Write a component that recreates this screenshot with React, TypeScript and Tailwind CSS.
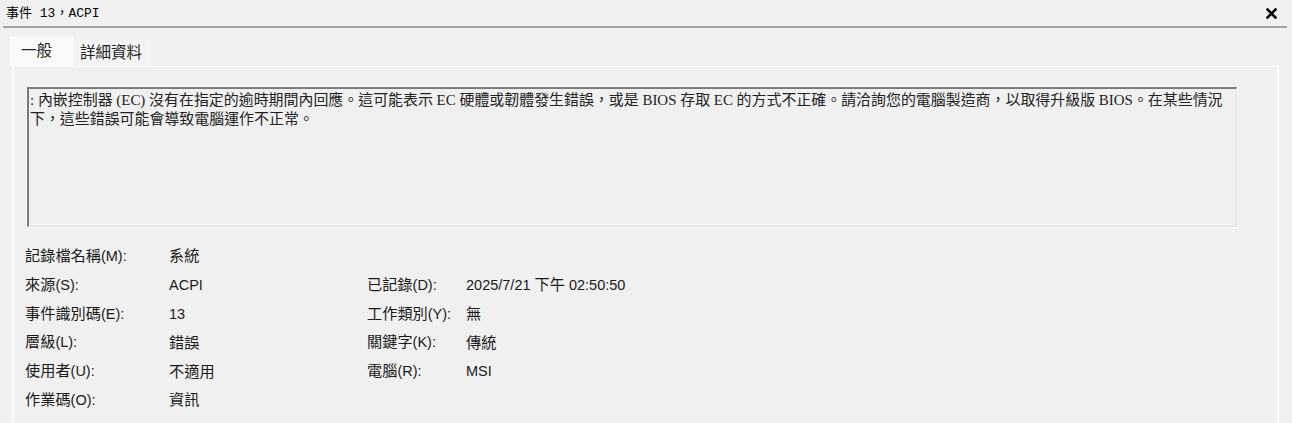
const rows: [string, string, string?, string?][] = [
  ['記錄檔名稱(M):', '系統'],
  ['來源(S):', 'ACPI', '已記錄(D):', '2025/7/21 下午 02:50:50'],
  ['事件識別碼(E):', '13', '工作類別(Y):', '無'],
  ['層級(L):', '錯誤', '關鍵字(K):', '傳統'],
  ['使用者(U):', '不適用', '電腦(R):', 'MSI'],
  ['作業碼(O):', '資訊'],
];

const uiFont = 'font-["Noto_Sans","Noto_Sans_CJK_TC",sans-serif]';

// CJK glyphs sit a bit larger than the latin ones in the dialog font
function Mixed({ text }: { text: string }) {
  const parts = text.match(/[\u3000-\u9fff\uff00-\uffef]+|[^\u3000-\u9fff\uff00-\uffef]+/g) ?? [];
  return (
    <>
      {parts.map((p, i) =>
        /[\u3000-\u9fff\uff00-\uffef]/.test(p) ? (
          <span key={i} className='font-["Noto_Sans_CJK_TC",sans-serif] text-[15.2px]'>{p}</span>
        ) : (
          <span key={i} className='font-["Liberation_Sans",sans-serif] text-[14.5px]'>{p}</span>
        )
      )}
    </>
  );
}

export default function App() {
  return (
    <div className="w-[1292px] h-[423px] overflow-hidden bg-[#f0f0f0] text-black">
      {/* title bar */}
      <div className="flex items-center justify-between h-[26px] pl-[6px] pr-[15px]">
        <span className='font-["Liberation_Mono","Noto_Sans_CJK_TC",monospace] text-[13px] leading-none'>
          事件 13，ACPI
        </span>
        <svg width="11" height="11" viewBox="0 0 11 11" className="mt-[1px]">
          <path d="M1.5 1.5 L9.5 9.5 M9.5 1.5 L1.5 9.5" stroke="#000" strokeWidth="2.6" strokeLinecap="square" />
        </svg>
      </div>
      <div className="mx-[3px] mr-[5px] h-[2px] bg-[#a3a3a3]" />

      {/* tabs */}
      <div className="pl-[10px] pr-[12px] pt-[9px]">
        <div className={`flex items-end h-[29px] ${uiFont}`}>
          <div className="relative z-10 h-[29px] w-[63px] bg-[#f9f9f9] border-t border-l border-r border-[#fdfdfd] flex items-start pl-[10px] pt-[1px] text-[15.5px] text-[#222]">
            一般
          </div>
          <div className="h-[26px] w-[78px] bg-[#f3f3f3] flex items-start pl-[7px] pt-[1px] text-[15.5px] text-[#222]">
            詳細資料
          </div>
        </div>

        {/* panel */}
        <div className="ml-[2px] w-[1267px] h-[370px] border-l-[2px] border-t-[1px] border-r-[2px] border-[#fbfbfb] bg-[#f0f0f0] pt-[20px] pl-[13px]">
          <div className="w-[1210px] h-[140px] border-t-[2px] border-l-[2px] border-t-[#7a7a7a] border-l-[#7a7a7a] border-b border-r border-b-[#dcdcdc] border-r-[#dcdcdc] outline outline-1 outline-[#fafafa]">
            <p className='pl-[1px] pt-[2px] font-["Liberation_Serif","Noto_Sans_CJK_TC",serif] text-[14.95px] leading-[19px] text-[#222] whitespace-nowrap'>
              : 內嵌控制器 (EC) 沒有在指定的逾時期間內回應。這可能表示 EC 硬體或韌體發生錯誤，或是 BIOS 存取 EC 的方式不正確。請洽詢您的電腦製造商，以取得升級版 BIOS。在某些情況
              <br />
              下，這些錯誤可能會導致電腦運作不正常。
            </p>
          </div>

          <div className="mt-[14px] -ml-[2px] grid grid-cols-[144px_198px_99px_1fr] auto-rows-[28.8px] items-center text-[#1a1a1a]">
            {rows.map((r, i) => (
              <div key={i} className="contents">
                <span><Mixed text={r[0]} /></span>
                <span><Mixed text={r[1]} /></span>
                <span>{r[2] ? <Mixed text={r[2]} /> : null}</span>
                <span>{r[3] ? <Mixed text={r[3]} /> : null}</span>
              </div>
            ))}
          </div>
        </div>
      </div>
    </div>
  );
}
